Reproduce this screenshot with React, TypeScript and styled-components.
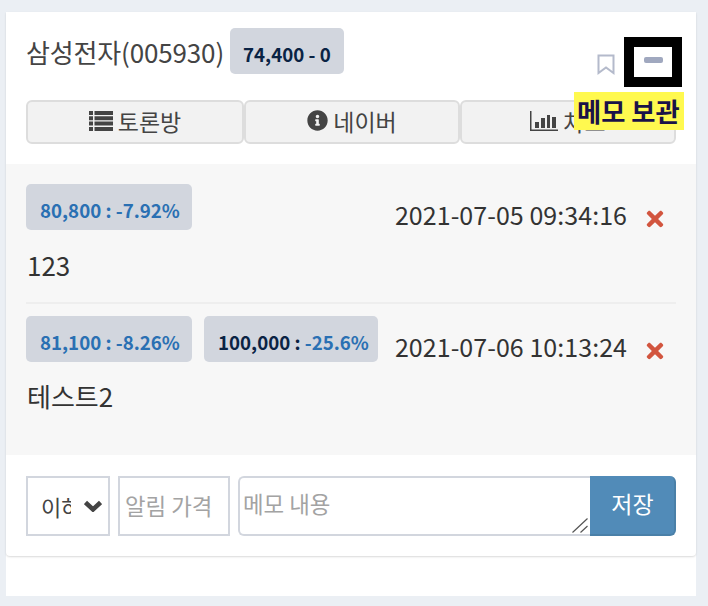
import React from "react";
import styled, { createGlobalStyle } from "styled-components";
import { FaInfoCircle, FaTimes } from "react-icons/fa";

const GlobalStyle = createGlobalStyle`
  html, body {
    margin: 0;
    padding: 0;
    background: #ebeff4;
    font-family: "Noto Sans CJK KR", "Noto Sans", sans-serif;
    color: #333;
  }
  * { box-sizing: border-box; }
`;

const Page = styled.div`
  width: 708px;
  height: 606px;
  padding: 12px 12px 10px 6px;
`;

const Panel = styled.div`
  background: #fff;
  height: 584px;
`;

const Card = styled.section`
  background: #fff;
  height: 544px;
  border-radius: 0 0 4px 4px;
  box-shadow: 0 1px 2px rgba(0, 0, 0, 0.15);
  display: flex;
  flex-direction: column;
`;

const Head = styled.header`
  position: relative;
  height: 152px;
  padding: 16px 20px 0 20px;
`;

const TitleRow = styled.div`
  display: flex;
  align-items: flex-start;
  height: 72px;
`;

const Title = styled.h2`
  margin: 6px 0 0 0;
  font-size: 26px;
  line-height: 36px;
  font-weight: 400;
  color: #444;
  letter-spacing: -0.15px;
`;

const PriceBadge = styled.span<{ $width: number }>`
  display: flex;
  align-items: center;
  width: ${(p) => p.$width}px;
  height: 46px;
  padding: 4px 0 0 14px;
  border-radius: 5px;
  background: #d2d6de;
  font-size: 18.7px;
  font-weight: 700;
  white-space: pre;
  color: #0a2344;
`;

const HeadBadge = styled(PriceBadge)`
  margin-left: 6px;
  padding-left: 13px;
`;

const Tools = styled.div`
  margin-left: auto;
  display: flex;
  align-items: center;
  margin-top: 9px;
  margin-right: -6px;
`;

const Bookmark = styled.svg`
  width: 18px;
  height: 21px;
  margin: 4px 9px 0 0;
`;

const MinusBox = styled.div`
  width: 58px;
  height: 50px;
  border: 10px solid #000;
  background: #fff;
  display: flex;
  align-items: center;
  justify-content: center;
`;

const MinusBar = styled.span`
  display: block;
  width: 19px;
  height: 6px;
  margin-top: -4px;
  border-radius: 2px;
  background: #a0a8bf;
`;

const Tag = styled.span`
  position: absolute;
  left: 568px;
  top: 80px;
  width: 110px;
  height: 38px;
  padding-left: 3px;
  background: #fff94f;
  color: #1a1248;
  font-size: 26.3px;
  font-weight: 700;
  line-height: 38px;
  white-space: nowrap;
`;

const LinkRow = styled.nav`
  display: grid;
  grid-template-columns: 218px 216px 216px;
`;

const LinkButton = styled.button`
  height: 44px;
  padding: 0 0 3px;
  display: flex;
  align-items: center;
  justify-content: center;
  gap: 5px;
  background: #f2f2f2;
  border: 2px solid #ddd;
  border-radius: 6px;
  font-family: inherit;
  font-size: 23px;
  color: #444;
  svg {
    flex: none;
  }
`;

const MemoList = styled.div`
  flex: 1;
  background: #f7f7f7;
  padding: 20px 20px 0;
`;

const MemoText = styled.p`
  margin: 15px 0 0 1px;
  font-size: 26px;
  line-height: 36px;
  color: #333;
`;

const Memo = styled.article`
  &:first-child {
    height: 120px;
    border-bottom: 2px solid #eee;
  }
  &:first-child ${MemoText} {
    margin-top: 16px;
  }
  &:last-child {
    padding-top: 12px;
  }
`;

const MemoTop = styled.div`
  display: flex;
  align-items: flex-start;
`;

const Badges = styled.div`
  display: flex;
  gap: 12px;
`;

const Blue = styled.span`
  color: #2a70b3;
`;

const Stamp = styled.time`
  margin-left: auto;
  margin-top: 13px;
  font-size: 25px;
  line-height: 34px;
  color: #333;
  letter-spacing: 0.05px;
`;

const Remove = styled.button`
  width: 18px;
  height: 20px;
  margin: 25px 12px 0 19px;
  padding: 0;
  border: 0;
  background: none;
  color: #d2553f;
  display: flex;
  align-items: center;
  justify-content: center;
  svg {
    flex: none;
  }
`;

const Form = styled.form`
  height: 101px;
  padding: 21px 20px 0;
  display: flex;
  align-items: flex-start;
`;

const SelectWrap = styled.div`
  position: relative;
  width: 84px;
  height: 60px;
  margin-right: 8px;
  svg {
    position: absolute;
    right: 8px;
    top: 24px;
    pointer-events: none;
  }
`;

const Select = styled.select`
  appearance: none;
  width: 100%;
  height: 100%;
  padding: 0 37px 0 13px;
  border: 2px solid #d2d6de;
  border-radius: 0;
  background: #fff;
  font-family: inherit;
  font-size: 22px;
  color: #444;
`;

const PriceInput = styled.input`
  width: 112px;
  height: 60px;
  margin-right: 8px;
  padding: 0 5px 2px;
  border: 2px solid #d2d6de;
  border-radius: 0;
  font-family: inherit;
  font-size: 22.4px;
  &::placeholder {
    color: #a3a3a3;
    opacity: 1;
  }
`;

const MemoField = styled.div`
  position: relative;
  width: 352px;
  height: 60px;
  svg {
    position: absolute;
    right: 2px;
    bottom: 3px;
    pointer-events: none;
  }
`;

const MemoInput = styled.textarea`
  display: block;
  width: 100%;
  height: 100%;
  padding: 11px 3px;
  border: 2px solid #d2d6de;
  border-right: 0;
  border-radius: 6px 0 0 6px;
  font-family: inherit;
  font-size: 22.4px;
  line-height: 28px;
  outline: none;
  resize: none;
  &::placeholder {
    color: #a3a3a3;
    opacity: 1;
  }
`;

const Save = styled.button`
  width: 86px;
  height: 60px;
  padding: 0 0 5px 1px;
  border: 0;
  border-right: 2px solid #4a80a8;
  border-bottom: 2px solid #4a80a8;
  border-radius: 0 6px 6px 0;
  background: #518bb8;
  color: #fff;
  font-family: inherit;
  font-size: 23px;
`;

export default function App() {
  return (
    <>
      <GlobalStyle />
      <Page>
        <Panel>
          <Card>
            <Head>
              <TitleRow>
                <Title>삼성전자(005930)</Title>
                <HeadBadge $width={114}>74,400 - 0</HeadBadge>
                <Tools>
                  <Bookmark viewBox="0 0 18 21" fill="none" stroke="#b4bacb" strokeWidth="2">
                    <path d="M1.5 1.5h15v17.5L9 13.5 1.5 19z" />
                  </Bookmark>
                  <MinusBox>
                    <MinusBar />
                  </MinusBox>
                </Tools>
              </TitleRow>
              <LinkRow>
                <LinkButton type="button">
                  <svg width="24" height="20" viewBox="0 0 24 20" fill="#444">
                    <path d="M0 0h4v4H0zM5.5 0H24v4H5.5zM0 5.3h4v4H0zM5.5 5.3H24v4H5.5zM0 10.6h4v4H0zM5.5 10.6H24v4H5.5zM0 16h4v4H0zM5.5 16H24v4H5.5z" />
                  </svg>
                  토론방
                </LinkButton>
                <LinkButton type="button">
                  <FaInfoCircle size={21} />
                  네이버
                </LinkButton>
                <LinkButton type="button">
                  <svg width="28" height="22" viewBox="0 0 28 22" fill="#444">
                    <path d="M0 1h1.5v18.5H28V21H0z" />
                    <path d="M5 12h4v6H5zM11 8h4v10h-4zM17 5h3v13h-3zM22 7h4v11h-4z" />
                  </svg>
                  차트
                </LinkButton>
              </LinkRow>
              <Tag>메모 보관</Tag>
            </Head>
            <MemoList>
              <Memo>
                <MemoTop>
                  <Badges>
                    <PriceBadge $width={166}>
                      <Blue>80,800 : -7.92%</Blue>
                    </PriceBadge>
                  </Badges>
                  <Stamp>2021-07-05 09:34:16</Stamp>
                  <Remove type="button" aria-label="삭제">
                    <FaTimes size={24} />
                  </Remove>
                </MemoTop>
                <MemoText>123</MemoText>
              </Memo>
              <Memo>
                <MemoTop>
                  <Badges>
                    <PriceBadge $width={166}>
                      <Blue>81,100 : -8.26%</Blue>
                    </PriceBadge>
                    <PriceBadge $width={174}>
                      100,000 : <Blue>-25.6%</Blue>
                    </PriceBadge>
                  </Badges>
                  <Stamp>2021-07-06 10:13:24</Stamp>
                  <Remove type="button" aria-label="삭제">
                    <FaTimes size={24} />
                  </Remove>
                </MemoTop>
                <MemoText>테스트2</MemoText>
              </Memo>
            </MemoList>
            <Form>
              <SelectWrap>
                <Select defaultValue="below">
                  <option value="below">이하</option>
                  <option value="above">이상</option>
                </Select>
                <svg width="18" height="12" viewBox="0 0 18 12" fill="none" stroke="#444" strokeWidth="4.5">
                  <path d="M1.5 2.5L9 9.5l7.5-7" />
                </svg>
              </SelectWrap>
              <PriceInput placeholder="알림 가격" />
              <MemoField>
                <MemoInput placeholder="메모 내용" />
                <svg width="16" height="15" viewBox="0 0 16 15" fill="none" stroke="#555" strokeWidth="1.2">
                  <path d="M0.5 14.5L15.5 0.5M8.5 14.5L15.5 8" />
                </svg>
              </MemoField>
              <Save type="button">저장</Save>
            </Form>
          </Card>
        </Panel>
      </Page>
    </>
  );
}
